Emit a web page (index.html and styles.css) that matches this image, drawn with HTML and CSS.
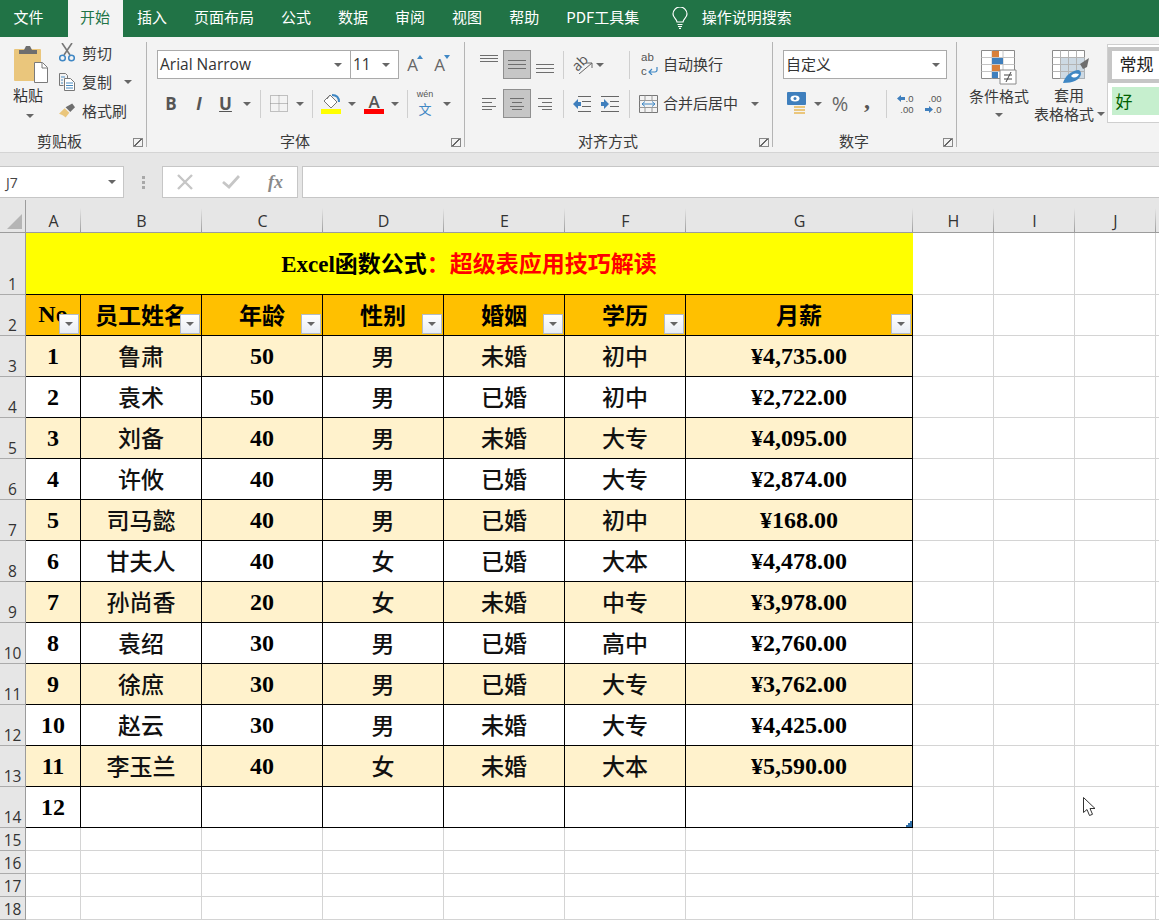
FILE: index.html
```html
<!DOCTYPE html>
<html lang="zh">
<head>
<meta charset="utf-8">
<title>Excel</title>
<link rel="stylesheet" href="styles.css">
</head>
<body>
<nav class="tabs">
  <span class="tab tab-file">文件</span>
  <span class="tab tab-home">开始</span>
  <span class="tab">插入</span>
  <span class="tab">页面布局</span>
  <span class="tab">公式</span>
  <span class="tab">数据</span>
  <span class="tab">审阅</span>
  <span class="tab">视图</span>
  <span class="tab">帮助</span>
  <span class="tab">PDF工具集</span>
  <svg class="bulb" width="16" height="22" viewBox="0 0 16 22" fill="none" stroke="#fff" stroke-width="1.2"><path d="M5 15c0-3-4-4-4-8a7 7 0 0 1 14 0c0 4-4 5-4 8z"/><path d="M5.500 17.500h5M6 19.500h4M7 21.300h2"/></svg>
  <span class="search">操作说明搜索</span>
</nav>

<section class="ribbon">
  <div class="group g-clip">
    <div class="gbody clip-body">
      <div class="paste">
        <svg width="34" height="38" viewBox="0 0 34 38"><rect x="0" y="4" width="27" height="32" rx="1" fill="#eac67c"/><path d="M5 9V5h5l2-4h4l2 4h5v4z" fill="#6e6e6e"/><path d="M20.500 17.500h8l5 5v15h-13z" fill="#fff" stroke="#7a7a7a"/><path d="M28 18v5h5" fill="none" stroke="#7a7a7a"/></svg>
        <span class="paste-t">粘贴</span>
        <i class="caret"></i>
      </div>
      <div class="clip-tools">
        <div class="ctool"><svg width="16" height="19" viewBox="0 0 16 19" fill="none"><path d="M3 0l8 12M13 0L5 12" stroke="#777" stroke-width="1.600"/><circle cx="3.500" cy="15" r="2.800" stroke="#3f87c4" stroke-width="1.500"/><circle cx="12.500" cy="15" r="2.800" stroke="#3f87c4" stroke-width="1.500"/></svg><span>剪切</span></div>
        <div class="ctool"><svg width="16" height="18" viewBox="0 0 16 18" fill="none" stroke="#777"><path d="M.5.500h6l2 2v4M.5.500v12h4"/><path d="M5.500 5.500h6l4 4v8h-10z" fill="#fff"/><path d="M7 10h7M7 12.500h7M7 15h7M2 4h4M2 7h2M2 10h2" stroke="#4a8bc0"/></svg><span>复制</span><i class="caret caret-copy"></i></div>
        <div class="ctool"><svg width="17" height="17" viewBox="0 0 17 17"><path d="M0 12l6-6 5 5-4 5c-2-2-4-3-7-4z" fill="#eac67c"/><path d="M7 5l5 5 5-5-3-4z" fill="#6e6e6e"/></svg><span>格式刷</span></div>
      </div>
    </div>
    <div class="glabel"><span class="gname">剪贴板</span><i class="launcher"></i></div>
  </div>

  <div class="group g-font">
    <div class="gbody">
      <div class="font-row1">
        <div class="field field-font"><span class="fval">Arial Narrow</span><i class="caret"></i></div>
        <div class="field field-size"><span class="fval">11</span><i class="caret"></i></div>
        <span class="grow">A<svg class="tri" width="6" height="4" viewBox="0 0 6 4"><path d="M0 4l3-4 3 4z" fill="#3f87c4"/></svg></span>
        <span class="grow">A<svg class="tri" width="6" height="4" viewBox="0 0 6 4"><path d="M0 0l3 4 3-4z" fill="#3f87c4"/></svg></span>
      </div>
      <div class="font-row2">
        <b class="fb">B</b>
        <i class="fi">I</i>
        <u class="fu">U</u>
        <i class="caret"></i>
        <i class="sep"></i>
        <svg width="18" height="17" viewBox="0 0 18 17" fill="none" stroke="#8a8a8a" stroke-dasharray="1 1"><path d="M.5.500h17v16h-17zM9 .500v16M.5 8.500h17"/></svg>
        <i class="caret"></i>
        <i class="sep"></i>
        <div class="colored"><svg width="20" height="15" viewBox="0 0 20 15" fill="none"><path d="M9 1l7 7-6 6-7-7z" fill="#fff" stroke="#777"/><path d="M9 1L6 5" stroke="#777"/><path d="M11 1c4 0 7 2 7 7" stroke="#3f87c4" stroke-width="2"/></svg><i class="bar bar-yellow"></i></div>
        <i class="caret"></i>
        <div class="colored"><span class="fa">A</span><i class="bar bar-red"></i></div>
        <i class="caret"></i>
        <i class="sep"></i>
        <div class="wen"><span class="wen-top">wén</span><span class="wen-bot">文</span></div>
        <i class="caret"></i>
      </div>
    </div>
    <div class="glabel"><span class="gname">字体</span><i class="launcher"></i></div>
  </div>

  <div class="group g-align">
    <div class="gbody">
      <div class="align-row1">
        <svg class="ln ln-top" width="18" height="10" viewBox="0 0 18 10"><path d="M0 .500h18M0 3.500h18M0 6.500h18"/></svg>
        <span class="pressed"><svg class="ln" width="18" height="10" viewBox="0 0 18 10"><path d="M0 .500h18M0 4.500h18M0 8.500h18"/></svg></span>
        <svg class="ln ln-bot" width="18" height="10" viewBox="0 0 18 10"><path d="M0 .500h18M0 4.500h18M0 8.500h18"/></svg>
        <i class="sep"></i>
        <span class="orient"><span class="orient-t">ab</span><svg class="orient-a" width="14" height="12" viewBox="0 0 14 12" fill="none" stroke="#666"><path d="M0 12L13 1M7 1h6v5"/></svg></span>
        <i class="caret"></i>
        <span></span>
        <i class="sep"></i>
        <div class="wide"><span class="wrap-ic"><span>ab</span><span class="wrap-c">c<svg width="10" height="8" viewBox="0 0 10 8" fill="none" stroke="#3f87c4" stroke-width="1.200"><path d="M9 0v3a2 2 0 0 1-2 2H1M4 2L1 5l3 3"/></svg></span></span><span class="wide-t">自动换行</span></div>
      </div>
      <div class="align-row2">
        <svg class="ln" width="14" height="12" viewBox="0 0 14 12"><path d="M0 .500h14M0 4.500h10M0 8.500h14M0 11.500h10"/></svg>
        <span class="pressed"><svg class="ln" width="14" height="12" viewBox="0 0 14 12"><path d="M0 .500h14M2 4.500h10M0 8.500h14M2 11.500h10"/></svg></span>
        <svg class="ln" width="14" height="12" viewBox="0 0 14 12"><path d="M0 .500h14M4 4.500h10M0 8.500h14M4 11.500h10"/></svg>
        <i class="sep"></i>
        <svg width="18" height="16" viewBox="0 0 18 16" fill="none"><path d="M5 .500h13M9 5.500h9M9 10.500h9M5 15.500h13" stroke="#666"/><path d="M0 8l5-5v3h3v4H5v3z" fill="#3f7fbd"/></svg>
        <svg width="18" height="16" viewBox="0 0 18 16" fill="none"><path d="M0 .500h18M9 5.500h9M9 10.500h9M0 15.500h18" stroke="#666"/><path d="M8 8L3 3v3H0v4h3v3z" fill="#3f7fbd"/></svg>
        <i class="sep"></i>
        <div class="wide"><svg width="19" height="18" viewBox="0 0 19 18" fill="none"><path d="M.5.500h18v17H.5z" stroke="#777"/><path d="M.5 5.500h18M.5 12.500h18M6 .500v5M13 .500v5M6 12.500v5M13 12.500v5" stroke="#999"/><path d="M3 9h13M3 9l3-2.500M3 9l3 2.500M16 9l-3-2.500M16 9l-3 2.500" stroke="#3f87c4"/></svg><span class="wide-t">合并后居中</span><i class="caret caret-merge"></i></div>
      </div>
    </div>
    <div class="glabel"><span class="gname">对齐方式</span><i class="launcher"></i></div>
  </div>

  <div class="group g-num">
    <div class="gbody">
      <div class="field field-num"><span class="fval-num">自定义</span><i class="caret"></i></div>
      <div class="num-row2">
        <svg width="20" height="23" viewBox="0 0 20 23"><rect x="0" y="0" width="19" height="13" rx="1" fill="#3f7fbd"/><ellipse cx="8" cy="6.500" rx="4.500" ry="3" fill="#fff"/><circle cx="8" cy="6.500" r="1.500" fill="#3f7fbd"/><path d="M7 14h11v2H7zM7 17h11v2H7zM7 20h11v2H7z" fill="#eac67c"/></svg>
        <i class="caret"></i>
        <span class="pct">%</span>
        <span class="comma">,</span>
        <i class="sep"></i>
        <div class="dec"><span class="dec-l"><svg width="8" height="7" viewBox="0 0 8 7"><path d="M0 3.500L4 0v2h4v3H4v2z" fill="#3f7fbd"/></svg>.0</span><span class="dec-l">.00</span></div>
        <div class="dec"><span class="dec-l">.00</span><span class="dec-l"><svg width="8" height="7" viewBox="0 0 8 7"><path d="M8 3.500L4 0v2H0v3h4v2z" fill="#3f7fbd"/></svg>.0</span></div>
      </div>
    </div>
    <div class="glabel"><span class="gname">数字</span><i class="launcher"></i></div>
  </div>

  <div class="group g-styles">
    <div class="big big-cond">
      <svg width="36" height="35" viewBox="0 0 36 35"><path d="M.5.500h33v28H.5z" fill="#fff" stroke="#8a8a8a"/><path d="M.5 7.500h33M.5 14.500h33M.5 21.500h33M11 .500v28M22 .500v28" stroke="#c4c4c4"/><path d="M11 1h7v6h-7zM11 15h8v6h-8z" fill="#d9803a"/><path d="M11 8h11v6H11zM11 22h6v6h-6z" fill="#3f7fbd"/><path d="M19 20h16v14H19z" fill="#fff" stroke="#8a8a8a"/><path d="M23 25h8M23 29h8M30 22l-5 10" stroke="#444" fill="none"/></svg>
      <span class="bigt">条件格式</span>
      <i class="caret"></i>
    </div>
    <div class="big big-table">
      <svg width="38" height="35" viewBox="0 0 38 35"><path d="M.5.500h32v28H.5z" fill="#fff" stroke="#8a8a8a"/><path d="M8.500 7h24v21.500h-24z" fill="#cdd9e3"/><path d="M.5 7.500h32M.5 14.500h32M.5 21.500h32M8.500 .500v28M16.500 .500v28M24.500 .500v28" stroke="#b4b4b4"/><path d="M28 14l9-6-2 9-4 2z" fill="#6e6e6e"/><path d="M11 33c2-7 8-12 15-13 2 0 3 2 3 4-1 6-8 9-18 9z" fill="#3f87c4"/><path d="M19 26c2-3 5-3 8-2-1 3-5 5-8 2z" fill="#fff"/></svg>
      <span class="bigt">套用</span>
      <span class="bigt bigt2">表格格式<i class="caret caret-tbl"></i></span>
    </div>
    <div class="gallery">
      <div class="st st-normal">常规</div>
      <div class="st st-good">好</div>
    </div>
  </div>
</section>

<section class="fbar">
  <div class="namebox"><span>J7</span><i class="caret"></i></div>
  <div class="fdots"><i></i><i></i><i></i></div>
  <div class="fbtns">
    <svg width="16" height="16" viewBox="0 0 16 16" fill="none" stroke="#c6c6c6" stroke-width="2.400"><path d="M1 1l14 14M15 1L1 15"/></svg>
    <svg width="18" height="14" viewBox="0 0 18 14" fill="none" stroke="#c6c6c6" stroke-width="2.800"><path d="M1 7l6 5L17 1"/></svg>
    <span class="fx">fx</span>
  </div>
  <div class="finput"></div>
</section>

<table class="sheet">
  <colgroup>
    <col class="c-head"><col class="c-a"><col class="c-std"><col class="c-std"><col class="c-std"><col class="c-std"><col class="c-std"><col class="c-g"><col class="c-x"><col class="c-x"><col class="c-x"><col class="c-k">
  </colgroup>
  <tr class="r-cols">
    <th class="corner"><svg width="15" height="15" viewBox="0 0 15 15"><path d="M15 0v15H0z" fill="#b5b5b5"/></svg></th>
    <th class="ch">A</th><th class="ch">B</th><th class="ch">C</th><th class="ch">D</th><th class="ch">E</th><th class="ch">F</th><th class="ch">G</th><th class="ch">H</th><th class="ch">I</th><th class="ch">J</th><th class="ch"></th>
  </tr>
  <tr class="r-title">
    <th class="rh">1</th>
    <td colspan="7" class="title">Excel函数公式<span class="red">：超级表应用技巧解读</span></td>
    <td></td><td></td><td></td><td></td>
  </tr>
  <tr class="r-data hdr">
    <th class="rh">2</th>
    <td class="n-head">No<i class="filter"></i></td><td>员工姓名<i class="filter"></i></td><td>年龄<i class="filter"></i></td><td>性别<i class="filter"></i></td><td>婚姻<i class="filter"></i></td><td>学历<i class="filter"></i></td><td>月薪<i class="filter"></i></td>
    <td class="g"></td><td class="g"></td><td class="g"></td><td class="g"></td>
  </tr>
  <tr class="r-data alt"><th class="rh">3</th><td class="n">1</td><td>鲁肃</td><td class="n">50</td><td>男</td><td>未婚</td><td>初中</td><td class="n">¥4,735.00</td><td class="g"></td><td class="g"></td><td class="g"></td><td class="g"></td></tr>
  <tr class="r-data"><th class="rh">4</th><td class="n">2</td><td>袁术</td><td class="n">50</td><td>男</td><td>已婚</td><td>初中</td><td class="n">¥2,722.00</td><td class="g"></td><td class="g"></td><td class="g"></td><td class="g"></td></tr>
  <tr class="r-data alt"><th class="rh">5</th><td class="n">3</td><td>刘备</td><td class="n">40</td><td>男</td><td>未婚</td><td>大专</td><td class="n">¥4,095.00</td><td class="g"></td><td class="g"></td><td class="g"></td><td class="g"></td></tr>
  <tr class="r-data"><th class="rh">6</th><td class="n">4</td><td>许攸</td><td class="n">40</td><td>男</td><td>已婚</td><td>大专</td><td class="n">¥2,874.00</td><td class="g"></td><td class="g"></td><td class="g"></td><td class="g"></td></tr>
  <tr class="r-data alt"><th class="rh">7</th><td class="n">5</td><td>司马懿</td><td class="n">40</td><td>男</td><td>已婚</td><td>初中</td><td class="n">¥168.00</td><td class="g"></td><td class="g"></td><td class="g"></td><td class="g"></td></tr>
  <tr class="r-data"><th class="rh">8</th><td class="n">6</td><td>甘夫人</td><td class="n">40</td><td>女</td><td>已婚</td><td>大本</td><td class="n">¥4,478.00</td><td class="g"></td><td class="g"></td><td class="g"></td><td class="g"></td></tr>
  <tr class="r-data alt"><th class="rh">9</th><td class="n">7</td><td>孙尚香</td><td class="n">20</td><td>女</td><td>未婚</td><td>中专</td><td class="n">¥3,978.00</td><td class="g"></td><td class="g"></td><td class="g"></td><td class="g"></td></tr>
  <tr class="r-data"><th class="rh">10</th><td class="n">8</td><td>袁绍</td><td class="n">30</td><td>男</td><td>已婚</td><td>高中</td><td class="n">¥2,760.00</td><td class="g"></td><td class="g"></td><td class="g"></td><td class="g"></td></tr>
  <tr class="r-data alt"><th class="rh">11</th><td class="n">9</td><td>徐庶</td><td class="n">30</td><td>男</td><td>已婚</td><td>大专</td><td class="n">¥3,762.00</td><td class="g"></td><td class="g"></td><td class="g"></td><td class="g"></td></tr>
  <tr class="r-data"><th class="rh">12</th><td class="n">10</td><td>赵云</td><td class="n">30</td><td>男</td><td>未婚</td><td>大专</td><td class="n">¥4,425.00</td><td class="g"></td><td class="g"></td><td class="g"></td><td class="g"></td></tr>
  <tr class="r-data alt"><th class="rh">13</th><td class="n">11</td><td>李玉兰</td><td class="n">40</td><td>女</td><td>未婚</td><td>大本</td><td class="n">¥5,590.00</td><td class="g"></td><td class="g"></td><td class="g"></td><td class="g"></td></tr>
  <tr class="r-data"><th class="rh">14</th><td class="n">12</td><td></td><td></td><td></td><td></td><td></td><td><svg class="handle" width="6" height="6" viewBox="0 0 6 6"><path d="M6 0v6H0V4h2V2h2V0z" fill="#2f6fa8"/></svg></td><td class="g"></td><td class="g"></td><td class="g"></td><td class="g"></td></tr>
  <tr class="r-thin"><th class="rh">15</th><td></td><td></td><td></td><td></td><td></td><td></td><td></td><td></td><td></td><td></td><td></td></tr>
  <tr class="r-thin"><th class="rh">16</th><td></td><td></td><td></td><td></td><td></td><td></td><td></td><td></td><td></td><td></td><td></td></tr>
  <tr class="r-thin"><th class="rh">17</th><td></td><td></td><td></td><td></td><td></td><td></td><td></td><td></td><td></td><td></td><td></td></tr>
  <tr class="r-thin"><th class="rh">18</th><td></td><td></td><td></td><td></td><td></td><td></td><td></td><td></td><td></td><td></td><td></td></tr>
</table>

<svg class="cursor" width="14" height="20" viewBox="0 0 14 20"><path d="M.5.500v15l3.500-3 2.500 6 3-1.200-2.500-5.800h5z" fill="#fff" stroke="#333"/></svg>
</body>
</html>
```

FILE: styles.css
```css
* { box-sizing: border-box; }
html, body { margin: 0; height: 920px; overflow: hidden; }
body {
  position: relative;
  background: #fff;
  font-family: "Noto Sans CJK SC", "Noto Sans", sans-serif;
  font-size: 15px;
  color: #3a3a3a;
}
i { font-style: normal; }

/* tabs */
.tabs { height: 37px; background: #217346; display: flex; align-items: center; color: #fff; }
.tab { height: 37px; line-height: 33px; padding: 0 13.5px; white-space: nowrap; }
.tab-file { margin-right: 10.5px; }
.tab-home { background: #f3f3f3; color: #217346; padding: 0 12.5px; margin-right: 1px; }
.bulb { margin-left: 19px; margin-top: -2px; }
.search { margin-left: 14px; line-height: 33px; height: 37px; }

/* ribbon */
.ribbon { height: 116px; background: #f3f3f3; border-bottom: 1px solid #d4d4d4; display: flex; }
.group { position: relative; display: flex; flex-direction: column; padding-top: 5px; }
.group::after { content: ""; position: absolute; right: 0; top: 5px; bottom: 5px; width: 1px; background: #b4b4b4; }
.g-clip { width: 147px; }
.g-font { width: 318px; padding-left: 10px; }
.g-align { width: 308px; padding-left: 10px; }
.g-num { width: 184px; padding-left: 10px; }
.g-styles { flex: 1; flex-direction: row; padding: 0; min-width: 0; }
.g-styles::after { display: none; }
.gbody { height: 89px; padding-top: 8px; }
.glabel { display: grid; grid-template-columns: 1fr auto 1fr 32px; align-items: center; height: 20px; }
.g-clip .glabel { grid-template-columns: 1fr auto 1fr 28px; }
.gname { grid-column: 2; line-height: 20px; white-space: nowrap; }
.launcher { grid-column: 4; justify-self: end; width: 10px; height: 9px; border: 1px solid #888; margin-right: 4px; margin-top: 3px; background: linear-gradient(135deg, transparent 45%, #666 45%, #666 55%, transparent 55%); }
.caret { display: block; width: 0; height: 0; border: 4px solid transparent; border-top-color: #666; border-bottom-width: 0; flex: none; }
.sep { display: block; width: 1px; height: 28px; background: #cfcfcf; }

/* clipboard */
.clip-body { display: flex; padding-left: 13px; }
.paste { width: 34px; display: flex; flex-direction: column; align-items: flex-start; margin-top: -5px; }
.paste svg { margin-left: 1px; }
.paste-t { width: 30px; text-align: center; line-height: 20px; margin-top: 2px; color: #333; }
.paste .caret { margin: 9px 0 0 13px; }
.clip-tools { margin-left: 12px; display: flex; flex-direction: column; margin-top: -12px; }
.ctool { height: 29px; display: flex; align-items: center; gap: 7px; white-space: nowrap; }
.ctool svg { flex: none; width: 16px; }
.caret-copy { margin-left: 5px; }

/* font */
.font-row1 { display: flex; align-items: stretch; height: 29px; }
.field { background: #fff; border: 1px solid #aaa; display: flex; align-items: center; justify-content: space-between; padding: 0 8px 0 2px; }
.fval { margin-top: -1px; }
.fval-num { margin-top: -3px; color: #333; }
.field-font { width: 194px; font-family: "Open Sans", sans-serif; font-size: 15.5px; color: #333; }
.field-size { width: 49px; margin-left: -1px; font-family: "Open Sans", sans-serif; font-size: 15.5px; color: #333; }
.grow { position: relative; width: 27px; font-family: "Open Sans", sans-serif; font-size: 17px; color: #666; text-align: center; line-height: 29px; }
.tri { position: absolute; top: 5px; right: 3px; }
.font-row2 { display: grid; grid-template-columns: 28px 28px 25px 18px 8px 30px 12px 12px 26px 16px 28px 14px 10px 26px 18px; place-items: center; height: 29px; margin-top: 10px; }
.fb, .fi, .fu { font-family: "Open Sans", sans-serif; font-size: 17px; font-weight: 700; color: #555; font-style: normal; line-height: 22px; }
.fi { font-style: italic; }
.colored { display: flex; flex-direction: column; align-items: center; width: 20px; }
.bar { display: block; width: 20px; height: 5px; }
.bar-yellow { background: #ffff00; }
.bar-red { background: #ff0000; }
.fa { font-family: "Open Sans", sans-serif; font-weight: 600; font-size: 17px; line-height: 15px; color: #555; }
.wen { display: flex; flex-direction: column; align-items: center; }
.wen-top { font-size: 9px; color: #555; font-family: "Liberation Sans", sans-serif; }
.wen-bot { font-size: 13px; color: #3f87c4; }

/* align */
.align-row1, .align-row2 { display: grid; align-items: center; justify-items: center; height: 29px; }
.align-row1 { grid-template-columns: 28px 28px 28px 8px 30px 6px 22px 8px 1fr; }
.align-row2 { grid-template-columns: 28px 28px 28px 8px 30px 26px 2px 8px 1fr; margin-top: 10px; }
.align-row2 .sep:last-of-type { grid-column: 8; }
.ln { fill: none; stroke: #6e6e6e; stroke-width: 1; }
.ln-bot { margin-top: 8px; }
.ln-top { margin-top: -10px; }
.pressed { width: 28px; height: 29px; background: #c6c6c6; border: 1px solid #8f8f8f; display: flex; align-items: center; justify-content: center; }
.orient { position: relative; display: block; width: 20px; height: 18px; }
.orient-t { display: block; transform: rotate(-45deg); font-family: "Open Sans", sans-serif; font-size: 14px; line-height: 14px; color: #555; margin: -2px 0 0 -1px; }
.orient-a { position: absolute; right: -1px; bottom: 0; }
.wide { justify-self: start; display: flex; align-items: center; gap: 5px; padding-left: 6px; white-space: nowrap; }
.wide-t { margin-top: -2px; }
.wrap-ic { width: 19px; display: flex; flex-direction: column; font-family: "Liberation Sans", sans-serif; font-size: 11.5px; line-height: 13.5px; padding-left: 2px; color: #555; }
.wrap-c { display: flex; align-items: center; gap: 1px; }
.caret-merge { margin-left: 8px; }

/* number */
.field-num { width: 164px; height: 29px; padding: 0 6px 0 2px; }
.num-row2 { display: grid; grid-template-columns: 28px 14px 30px 24px 14px 24px 32px; place-items: center; height: 29px; margin-top: 10px; }
.pct { font-family: "Open Sans", sans-serif; font-size: 20px; color: #666; line-height: 29px; }
.comma { font-family: "Liberation Serif", serif; font-weight: 700; font-size: 24px; color: #555; line-height: 20px; margin-top: -8px; }
.dec { display: flex; flex-direction: column; align-items: flex-end; font-family: "Liberation Sans", sans-serif; font-size: 9.5px; line-height: 11px; color: #555; }
.dec-l { display: flex; align-items: center; gap: 1px; }

/* styles */
.big { display: flex; flex-direction: column; align-items: center; padding-top: 13px; }
.big svg { display: block; }
.big-cond { width: 60px; margin-left: 12px; }
.big-table { width: 72px; margin-left: 5px; align-items: flex-start; }
.bigt { line-height: 20px; margin-top: 1px; white-space: nowrap; }
.big-table .bigt { margin-top: 0; margin-left: 20px; }
.big-table .bigt2 { margin-top: -1px; margin-left: 0; display: flex; align-items: center; gap: 3px; }
.big-cond .caret { margin-top: 7px; }
.big-table svg { margin-left: 18px; }
.gallery { margin: 7px 0 0 2px; width: 52px; height: 79px; background: #fff; border: 1px solid #cfcfcf; border-right: 0; padding-top: 2px; overflow: hidden; }
.st { font-size: 17px; white-space: nowrap; padding-left: 6px; }
.st-normal { height: 36px; line-height: 26px; border: 4px solid #c6c6c6; border-right: 0; padding-left: 7px; background: #fff; color: #222; }
.st-good { height: 28px; line-height: 28px; margin: 4px 0 0 4px; padding-left: 3px; background: #c6efce; color: #006100; }

/* formula bar */
.fbar { height: 47px; background: #e6e6e6; display: flex; align-items: flex-start; padding-top: 13px; }
.namebox { width: 125px; height: 32px; margin-left: -1px; background: #fff; border: 1px solid #c6c6c6; display: flex; align-items: center; justify-content: space-between; padding: 0 7px 0 6px; font-family: "Open Sans", sans-serif; font-size: 14px; color: #444; }
.fdots { width: 38px; height: 32px; display: flex; flex-direction: column; align-items: center; justify-content: center; gap: 2px; }
.fdots i { display: block; width: 3px; height: 3px; background: #a8a8a8; }
.fbtns { width: 136px; height: 32px; background: #fff; border: 1px solid #c6c6c6; display: flex; align-items: center; justify-content: space-between; padding: 0 14px; }
.fx { font-family: "Liberation Serif", serif; font-style: italic; font-weight: 700; font-size: 18px; color: #8a8a8a; }
.finput { flex: 1; height: 32px; margin-left: 4px; background: #fff; border: 1px solid #c6c6c6; border-right: 0; }

/* sheet */
.sheet { border-collapse: separate; border-spacing: 0; table-layout: fixed; width: 1160px; }
.c-head { width: 26px; }
.c-a { width: 55px; }
.c-std { width: 121px; }
.c-g { width: 227px; }
.c-x { width: 81px; }
.c-k { width: 5px; }
.sheet th, .sheet td { padding: 0; }
.sheet td { border-right: 1px solid #d4d4d4; border-bottom: 1px solid #d4d4d4; position: relative; }
.r-cols { height: 33px; }
.r-title { height: 62px; }
.r-data { height: 41px; }
.r-thin { height: 23px; }
.ch {
  background: #e6e6e6 linear-gradient(to bottom, #e6e6e6 25%, #9c9c9c) right top / 1px 100% no-repeat;
  border-bottom: 1px solid #9c9c9c;
  font-family: "Open Sans", sans-serif; font-weight: 400; font-size: 16px; color: #333;
  vertical-align: bottom; line-height: 22px;
}
.corner { background: #e6e6e6; border-right: 1px solid #9c9c9c; border-bottom: 1px solid #9c9c9c; vertical-align: top; text-align: left; }
.corner svg { display: block; margin: 14px 0 0 7px; }
.rh {
  background: #e6e6e6; border-right: 1px solid #9c9c9c; border-bottom: 1px solid #ababab;
  font-family: "Open Sans", sans-serif; font-weight: 400; font-size: 15.5px; line-height: 19px; color: #333;
  vertical-align: bottom; text-align: center; overflow: hidden;
}
.sheet td.title { background: #ffff00; text-align: center; font-family: "Liberation Serif", "Noto Sans CJK SC", serif; font-weight: 700; font-size: 23px; color: #000; border-bottom-color: #000; border-right-color: #ffff00; padding-bottom: 4px; }
.red { color: #ff0000; }
.sheet .r-data td { text-align: center; font-size: 23px; color: #111; font-family: "Liberation Serif", "Noto Sans CJK SC", serif; font-weight: 500; padding-bottom: 3px; }
.sheet .r-data td:nth-child(-n+8) { border-right-color: #000; border-bottom-color: #000; }
.sheet .r-data td.g { border-right-color: #d4d4d4; border-bottom-color: #d4d4d4; }
.sheet .r-data td.n { font-weight: 700; font-size: 24px; color: #000; padding-bottom: 0; }
.sheet .hdr td { background: #ffc000; font-weight: 700; color: #000; }
.sheet .hdr td.n-head { font-size: 24px; padding-bottom: 1px; }
.sheet .hdr td.g { background: #fff; }
.alt td { background: #fff2cc; }
.alt td.g { background: #fff; }
.filter { position: absolute; right: 1px; bottom: 1px; width: 20px; height: 20px; background: linear-gradient(#fff, #e9edf3); border: 1px solid #b4bcc8; }
.filter::after { content: ""; position: absolute; left: 5px; top: 7px; border: 4px solid transparent; border-top-color: #666; border-bottom-width: 0; }
.handle { position: absolute; right: 0; bottom: 0; display: block; }
.cursor { position: absolute; left: 1083px; top: 797px; }
```
